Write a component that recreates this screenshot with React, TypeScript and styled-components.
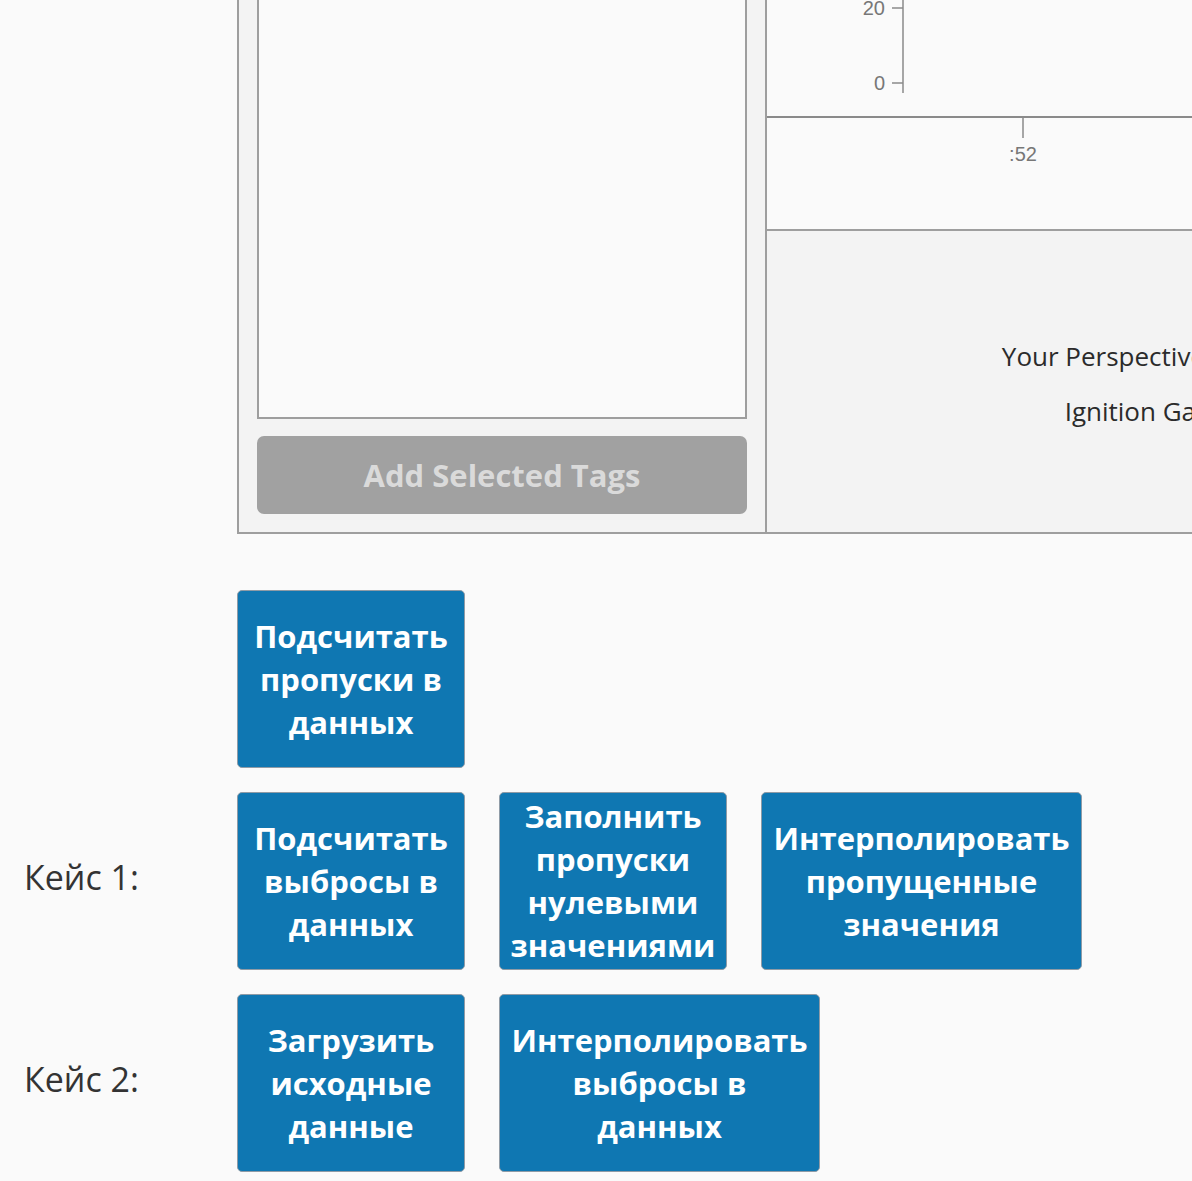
import React from "react";
import styled, { createGlobalStyle } from "styled-components";

const GlobalStyle = createGlobalStyle`
  *, *::before, *::after {
    box-sizing: border-box;
  }
  html, body {
    margin: 0;
    padding: 0;
    overflow: hidden;
    background: #fafafa;
    font-family: "Open Sans", "Noto Sans", sans-serif;
  }
`;

const Page = styled.div`
  width: 1192px;
  min-height: 1181px;
  background: #fafafa;
  overflow: hidden;
`;

const Frame = styled.div`
  display: flex;
  width: 1100px;
  margin: -30px 0 0 237px;
  border: 2px solid #9e9e9e;
  border-right: none;
  background: #f3f3f3;
`;

const TagPanel = styled.div`
  flex: none;
  width: 528px;
  padding: 19px 18px 18px 18px;
  border-right: 2px solid #9e9e9e;
  display: flex;
  flex-direction: column;
  gap: 17px;
`;

const TagList = styled.div`
  height: 428px;
  background: #fafafa;
  border: 2px solid #9e9e9e;
`;

const AddButton = styled.button`
  height: 78px;
  border: none;
  border-radius: 7px;
  background: #a1a1a1;
  color: #dadada;
  font-family: "Open Sans", "Noto Sans", sans-serif;
  font-weight: 700;
  font-size: 31px;
  padding: 0;
  cursor: default;
`;

const ViewPanel = styled.div`
  flex: 1;
  min-width: 0;
  display: flex;
  flex-direction: column;
`;

const ChartArea = styled.div`
  height: 259px;
  background: #fafafa;
  border-bottom: 2px solid #9e9e9e;
  svg {
    display: block;
  }
`;

const Message = styled.div`
  flex: 1;
  width: 882px;
  padding-top: 108px;
  display: flex;
  flex-direction: column;
  align-items: center;
  gap: 20px;
  color: #2b2b2b;
  font-size: 26px;
  line-height: 35px;
  white-space: nowrap;
`;

const Actions = styled.div`
  display: grid;
  grid-template-columns: 213px auto;
  row-gap: 24px;
  padding: 56px 0 0 24px;
`;

const CaseLabel = styled.div`
  display: flex;
  align-items: center;
  font-size: 34px;
  color: #333;
  padding-bottom: 8px;
`;

const ButtonRow = styled.div`
  display: flex;
  gap: 34px;
`;

const ActionButton = styled.button<{ $wide?: boolean }>`
  width: ${(p) => (p.$wide ? "321px" : "228px")};
  height: 178px;
  padding: 0 8px;
  border: 1px solid #8f9ba6;
  border-radius: 5px;
  background: #0f77b2;
  color: #fff;
  font-family: "Open Sans", "Noto Sans", sans-serif;
  font-weight: 700;
  font-size: 31px;
  line-height: 43px;
  text-align: center;
  cursor: default;
`;

const axis = "#8a8a8a";
const label = "#777";
const tickFont = "Liberation Sans, Arial, sans-serif";

function Chart() {
  return (
    <svg width={800} height={257}>
      <line x1={136} y1={0} x2={136} y2={121} stroke={axis} strokeWidth={1.5} />
      <line x1={125} y1={36} x2={136} y2={36} stroke={axis} strokeWidth={1.5} />
      <line x1={125} y1={111} x2={136} y2={111} stroke={axis} strokeWidth={1.5} />
      <text x={118} y={43} textAnchor="end" fontSize={20} fill={label} fontFamily={tickFont}>
        20
      </text>
      <text x={118} y={118} textAnchor="end" fontSize={20} fill={label} fontFamily={tickFont}>
        0
      </text>
      <line x1={0} y1={145} x2={800} y2={145} stroke={axis} strokeWidth={2} />
      <line x1={256} y1={145} x2={256} y2={166} stroke={axis} strokeWidth={1.5} />
      <text x={256} y={189} textAnchor="middle" fontSize={20} fill={label} fontFamily={tickFont}>
        :52
      </text>
    </svg>
  );
}

function App() {
  return (
    <Page>
      <GlobalStyle />
      <Frame>
        <TagPanel>
          <TagList />
          <AddButton>Add Selected Tags</AddButton>
        </TagPanel>
        <ViewPanel>
          <ChartArea>
            <Chart />
          </ChartArea>
          <Message>
            <div>Your Perspective trial has expired.</div>
            <div>Ignition Gateway: demo</div>
          </Message>
        </ViewPanel>
      </Frame>
      <Actions>
        <div />
        <ButtonRow>
          <ActionButton>Подсчитать пропуски в данных</ActionButton>
        </ButtonRow>
        <CaseLabel>Кейс 1:</CaseLabel>
        <ButtonRow>
          <ActionButton>Подсчитать выбросы в данных</ActionButton>
          <ActionButton>Заполнить пропуски нулевыми значениями</ActionButton>
          <ActionButton $wide>Интерполировать пропущенные значения</ActionButton>
        </ButtonRow>
        <CaseLabel>Кейс 2:</CaseLabel>
        <ButtonRow>
          <ActionButton>Загрузить исходные данные</ActionButton>
          <ActionButton $wide>Интерполировать выбросы в данных</ActionButton>
        </ButtonRow>
      </Actions>
    </Page>
  );
}

export default App;
